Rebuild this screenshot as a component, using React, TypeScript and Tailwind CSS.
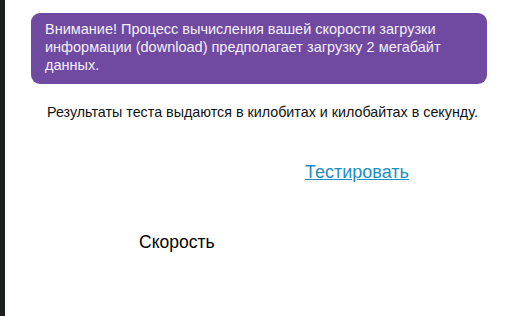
export default function App() {
  return (
    <div className="flex h-[316px] w-[529px] bg-white font-['Liberation_Sans',Arial,sans-serif]">
      <div className="w-[5px] shrink-0 bg-[#1b1f1e]" />
      <div className="flex flex-1 flex-col">
        <div className="ml-[26px] mt-[13px] w-[456px] rounded-[9px] bg-[#704aa1] px-[14px] pb-[10px] pt-[7px] text-[14.5px] leading-[18px] text-[#f4f0fa]">
          Внимание! Процесс вычисления вашей скорости загрузки информации (download) предполагает загрузку 2 мегабайт данных.
        </div>
        <p className="ml-[42px] mt-[19px] text-[14.3px] leading-[18px] text-[#111]">
          Результаты теста выдаются в килобитах и килобайтах в секунду.
        </p>
        <a href="#" className="ml-[300px] mt-[41px] self-start text-[18px] leading-[20px] text-[#1e8ec4] underline">
          Тестировать
        </a>
        <p className="ml-[134px] mt-[50px] text-[17.5px] leading-[20px] text-black">Скорость</p>
      </div>
    </div>
  )
}
